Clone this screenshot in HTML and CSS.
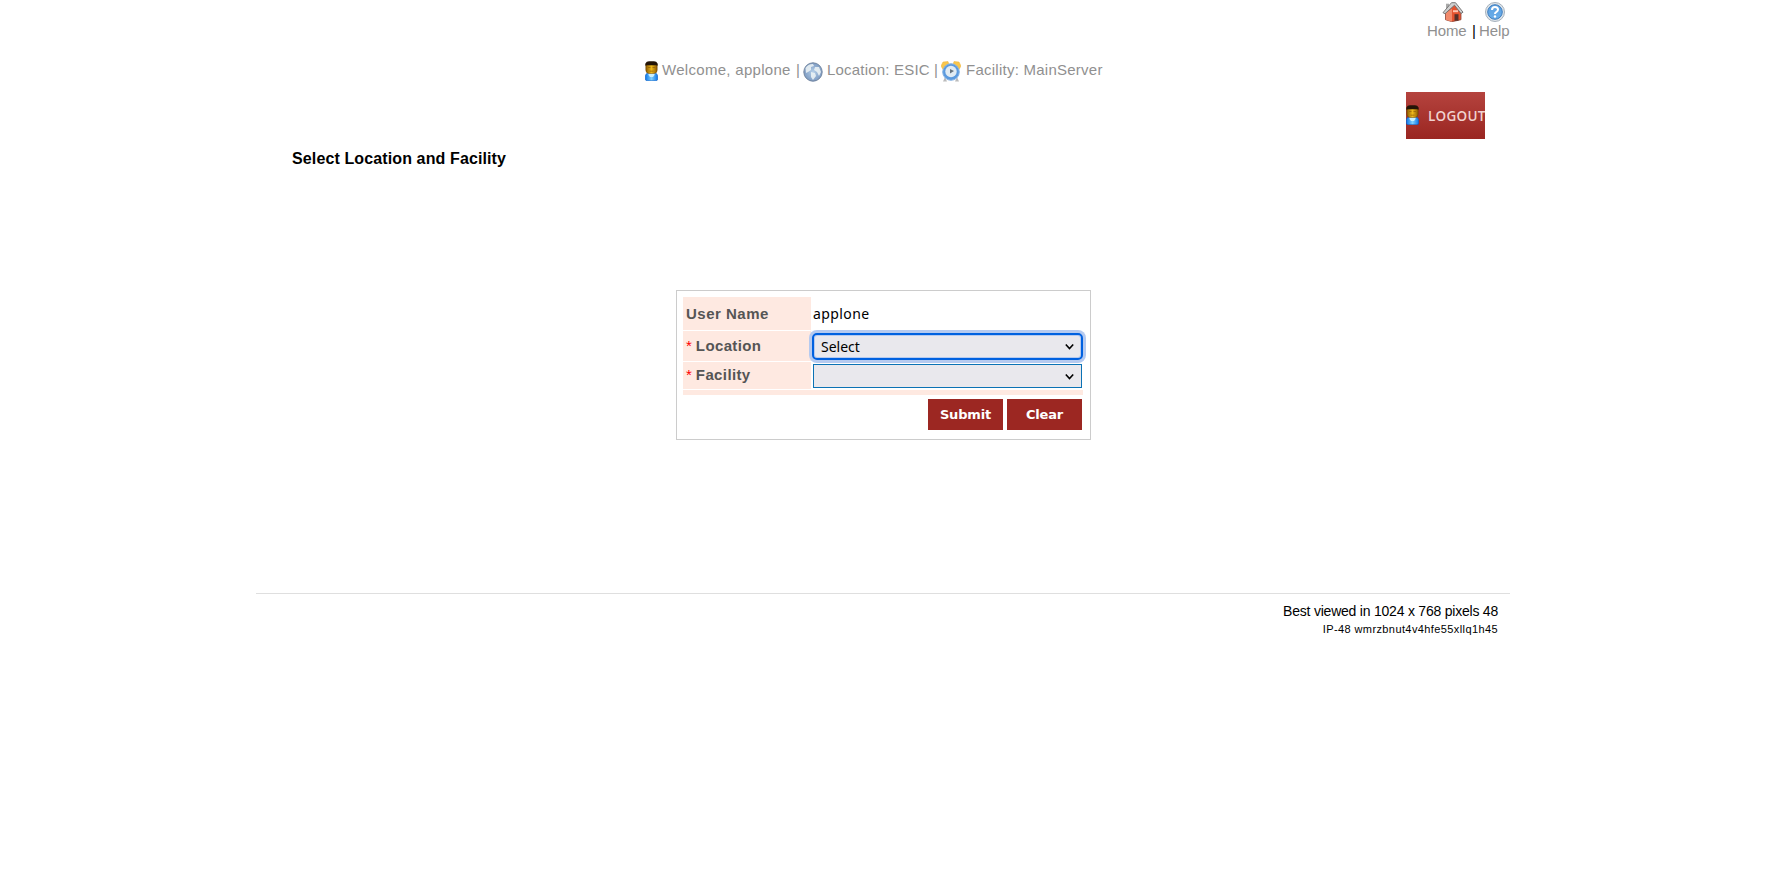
FILE: index.html
```html
<!DOCTYPE html>
<html lang="en">
<head>
<meta charset="utf-8">
<title>Select Location and Facility</title>
<link rel="stylesheet" href="styles.css">
</head>
<body>
<svg class="defs" width="0" height="0">
  <defs>
    <linearGradient id="shirt" x1="0" x2="1"><stop offset="0" stop-color="#0b74e8"/><stop offset=".5" stop-color="#7fd0ff"/><stop offset="1" stop-color="#0b74e8"/></linearGradient>
    <linearGradient id="face" x1="0" x2="1"><stop offset="0" stop-color="#8b5700"/><stop offset=".5" stop-color="#eeb91c"/><stop offset="1" stop-color="#8b5700"/></linearGradient>
    <linearGradient id="blue" x1="0" x2="0" y2="1"><stop offset="0" stop-color="#5c9fe0"/><stop offset="1" stop-color="#6aaeea"/></linearGradient>
    <radialGradient id="globe"><stop offset="0" stop-color="#b5cfe8"/><stop offset="1" stop-color="#7d9bc2"/></radialGradient>
    <symbol id="user" viewBox="0 0 13 20">
      <path d="M.3 14.500Q1 12 3.500 12h6q2.500 0 3.200 2.500V18q0 1.700-2 1.700h-8.400q-2 0-2-1.700z" fill="url(#shirt)" stroke="#0a5fc8" stroke-width=".6"/>
      <path d="M3.500 12h6v2l-1.500 2h-3l-1.500-2z" fill="#c9f0ff"/>
      <path d="M.8 3h11.400v6q0 3-3 3.500H3.800q-3-.5-3-3.500z" fill="url(#face)" stroke="#6b4503" stroke-width=".5"/>
      <path d="M.4 4.800V2.500Q1.500.3 4 .3h5q2.500 0 3.600 2.200v2.300l-1.600-.6H2z" fill="#231407"/>
      <path d="M3 6.300h2.500v.8H3zM7.500 6.300H10v.8H7.500zM4.500 9.800h4v.7h-4z" fill="#986408"/>
    </symbol>
  </defs>
</svg>
<div class="page">
  <nav class="toplinks">
    <a class="toplink">
      <svg width="22" height="22" viewBox="0 -.7 22 22">
        <path d="M3.500 11v8l6.500 2 9-2v-8L12 4z" fill="#e5532f" stroke="#8f4a3c" stroke-width=".8"/>
        <path d="M4 12v7l6 2V8z" fill="#f08a6c"/>
        <path d="M12.500 13.500h4V20h-4z" fill="#54302a"/><path d="M11 9.500h5v2h-5z" fill="#ffc2ae"/>
        <path d="M4 3h3v5H4z" fill="#aaa"/>
        <path d="M1 12L9.500 2h4L21 11.500l-2 1.300L12.500 4.500 3 13z" fill="#d0d0d0" stroke="#6c6c6c" stroke-width=".9"/>
      </svg>
      <span>Home</span>
    </a>
    <span class="bar">|</span>
    <a class="toplink">
      <svg width="22" height="22" viewBox="0 -.5 22 22">
        <circle cx="11" cy="11.500" r="9.500" fill="#dfe5ea" stroke="#a6b1bc"/>
        <circle cx="11" cy="11.500" r="7.300" fill="url(#blue)" stroke="#3f7dbd"/>
        <path d="M8 9.500q0-3 3-3t3 2.500q0 1.500-1.500 2.300T11 13.500" fill="none" stroke="#fff" stroke-width="2"/><circle cx="11" cy="16" r="1.200" fill="#fff"/>
      </svg>
      <span>Help</span>
    </a>
  </nav>
  <div class="welcome">
    <svg class="w-user" width="13" height="20"><use href="#user"/></svg>
    <span class="w-name">Welcome, applone</span><span class="w-sep">|</span>
    <svg class="w-globe" width="20" height="20" viewBox="0 0 20 20">
      <circle cx="10" cy="10" r="9.200" fill="url(#globe)" stroke="#7386a0"/>
      <path d="M2.500 6Q5 2 10 2l1 2-3 1v3l-3 2-2 1zM8 10l4 1 1 3-3 4-2-3zM12 5l4 0 2 5-2 4-2-4-3-2z" fill="#eef4f6" opacity=".85"/>
    </svg>
    <span class="w-loc">Location: ESIC</span><span class="w-sep2">|</span>
    <svg class="w-clock" width="20" height="21" viewBox="0 0 20 21">
      <path d="M4 16l-2 4.500h4zM16 16l2 4.500h-4z" fill="#bbb"/>
      <path d="M0 5l2-4 5-.5 1 3-6 5zM20 5l-2-4-5-.5-1 3 6 5z" fill="#f8c64d" stroke="#efb33a" stroke-width=".5"/>
      <circle cx="10" cy="11" r="8.300" fill="#5b9ade" stroke="#86b3e4"/>
      <circle cx="10" cy="10.500" r="5.700" fill="#e0ebf3"/>
      <path d="M9 8v4.500l4-2.500z" fill="#66737e"/>
    </svg>
    <span class="w-fac">Facility: MainServer</span>
  </div>
  <div class="logout-row">
    <a class="logout"><svg width="13" height="20"><use href="#user"/></svg><span>LOGOUT</span></a>
  </div>
  <h1 class="title">Select Location and Facility</h1>
  <form class="panel">
    <div class="row row-user"><div class="label">User Name</div><div class="value">applone</div></div>
    <div class="row row-loc"><div class="label"><i>*</i>Location</div>
      <div class="select focused"><span>Select</span><svg width="9" height="7" viewBox="0 0 9 7"><path d="M.8 1.500l3.700 4 3.700-4" fill="none" stroke="#000" stroke-width="1.600"/></svg></div></div>
    <div class="row row-fac"><div class="label"><i>*</i>Facility</div>
      <div class="select"><span></span><svg width="9" height="7" viewBox="0 0 9 7"><path d="M.8 1.500l3.700 4 3.700-4" fill="none" stroke="#000" stroke-width="1.600"/></svg></div></div>
    <div class="strip"></div>
    <div class="buttons"><button type="button">Submit</button><button type="button">Clear</button></div>
  </form>
  <footer class="footer">
    <div class="best">Best viewed in 1024 x 768 pixels 48</div>
    <div class="ip">IP-48 wmrzbnut4v4hfe55xllq1h45</div>
  </footer>
</div>
</body>
</html>
```
FILE: styles.css
```css
* { box-sizing: border-box; }
body { margin: 0; background: #fff; color: #000; font-family: "Liberation Sans", Arial, sans-serif; }
svg { display: block; flex: none; }
.defs { position: absolute; }
.page { width: 1254px; margin: 0 auto; white-space: nowrap; }
.toplinks { display: flex; justify-content: flex-end; height: 52px; color: #909090; font-size: 15px; letter-spacing: -.1px; line-height: 16px; }
.toplink { display: flex; flex-direction: column; width: 40px; }
.toplink:last-child { width: 31px; }
.toplink svg { margin-left: 15px; }
.toplink:last-child svg { margin-left: 5px; }
.toplink span { margin-top: 1px; }
.bar { width: 12px; padding: 23px 0 0 5px; color: #000; }
.welcome { display: flex; height: 40px; padding-left: 389px; color: #909090; font-size: 15px; letter-spacing: .3px; line-height: 36px; }
.w-user { margin-top: 9px; }
.w-name { width: 134px; margin-left: 4px; }
.w-sep { width: 7px; }
.w-globe { margin-top: 10px; }
.w-loc { width: 106px; margin-left: 4px; letter-spacing: .2px; }
.w-sep2 { width: 8px; padding-left: 1px; }
.w-clock { margin-top: 9px; }
.w-fac { margin-left: 5px; letter-spacing: .25px; }
.logout-row { display: flex; justify-content: flex-end; height: 47px; padding-right: 25px; }
.logout { display: flex; width: 79px; overflow: hidden; background: linear-gradient(#b5433e, #9a2621); color: #f0d2d0; font: 600 13.5px/49px "Open Sans", sans-serif; letter-spacing: .25px; }
.logout svg { margin-top: 13px; }
.logout span { margin-left: 9px; }
.title { height: 151px; margin: 0; padding: 10px 0 0 36px; font-size: 16px; line-height: 20px; font-weight: 700; letter-spacing: .12px; }
.panel { width: 415px; height: 150px; margin-left: 420px; padding: 6px 7px 0 6px; border: 1px solid #ccc; }
.row { display: flex; margin-bottom: 1px; }
.label { width: 128px; padding-left: 3px; background: #fee9e1; color: #555; font-size: 15px; font-weight: 700; letter-spacing: .5px; }
.label i { color: #f00; font-style: normal; font-weight: 400; margin-right: 4px; letter-spacing: 0; }
.row-user { height: 33px; line-height: 34px; }
.row-loc { height: 30px; line-height: 30px; }
.row-fac { height: 27px; line-height: 26px; }
.row-loc .label, .row-fac .label { letter-spacing: .38px; }
.value { margin-left: 2px; font: 14px/34px "Noto Sans", sans-serif; letter-spacing: .4px; }
.select { display: flex; align-items: center; justify-content: space-between; width: 269px; height: 24px; margin: 2px 0 0 2px; padding: 0 7px; border: 1px solid #0b72b5; background: #e9e8ed; font: 14px/20px "Noto Sans", sans-serif; }
.focused { width: 271px; height: 27px; margin: 2px 0 0 1px; padding: 0 7px; border: 2px solid #0061e0; border-radius: 5px; box-shadow: 0 0 0 3px #b5caf0, inset 0 0 0 1px #b5caf0; }
.strip { width: 400px; height: 5px; background: #fee9e1; }
.buttons { display: flex; justify-content: flex-end; gap: 4px; margin-top: 4px; padding-right: 1px; }
button { width: 75px; height: 31px; padding: 0; border: 0; background: #9c2722; color: #fff; font: 700 13px/31px "DejaVu Sans", sans-serif; letter-spacing: -.15px; }
.footer { height: 60px; margin-top: 153px; padding: 8px 12px 0 0; border-top: 1px solid #dfdfdf; text-align: right; }
.best { font-size: 14px; line-height: 18px; letter-spacing: -.22px; }
.ip { font-size: 11px; line-height: 18px; letter-spacing: .4px; }
```
